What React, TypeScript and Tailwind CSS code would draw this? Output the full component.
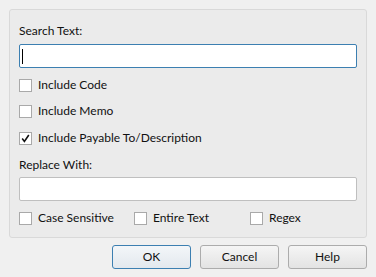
import { ReactNode } from 'react'

// Find/replace dialog: search text, field toggles, replace text, match options.

function Check({ checked = false }: { checked?: boolean }) {
  return (
    <span className="flex h-[13px] w-[13px] shrink-0 items-center justify-center border border-[#a9a9a9] bg-white">
      {checked && (
        <svg width="9" height="9" viewBox="0 0 9 9" fill="none" stroke="#111" strokeWidth="1.6">
          <path d="M1.2 4.6 L3.4 7.4 L7.8 1" />
        </svg>
      )}
    </span>
  )
}

function Option({ label, checked, className = '' }: { label: string; checked?: boolean; className?: string }) {
  return (
    <label className={`flex h-4 items-center gap-[6px] ${className}`}>
      <Check checked={checked} />
      <span>{label}</span>
    </label>
  )
}

function Button({ children, primary }: { children: ReactNode; primary?: boolean }) {
  return (
    <button
      className={
        primary
          ? 'h-6 w-[79px] rounded-[3px] border border-[#3c7fb1] bg-gradient-to-b from-[#f3f6f9] to-[#e3e8ee] text-[#111]'
          : 'h-6 w-[79px] rounded-[3px] border border-[#acacac] bg-gradient-to-b from-[#f5f5f5] to-[#e3e3e3] text-[#111]'
      }
    >
      {children}
    </button>
  )
}

export default function App() {
  return (
    <div className="h-[277px] w-[376px] bg-[#f0f0f0] p-[9px] font-['Lato',sans-serif] text-[12px] leading-4 text-[#111]">
      <div className="flex flex-col rounded-[3px] border border-[#d9d9d9] bg-[#ebebeb] px-[9px] pb-[11px] pt-[13px]">
        <span>Search Text:</span>
        <div className="mt-[5px] flex h-6 items-center rounded-[2px] border border-[#3c7fb1] bg-white px-[2px]">
          <span className="h-[15px] w-px bg-black" />
        </div>

        <Option label="Include Code" className="mt-[9px]" />
        <Option label="Include Memo" className="mt-[10px]" />
        <Option label="Include Payable To/Description" checked className="mt-[11px]" />

        <span className="mt-[11px]">Replace With:</span>
        <div className="mt-1 h-6 rounded-[2px] border border-[#bfbfbf] bg-white" />

        <div className="mt-[9px] flex">
          <Option label="Case Sensitive" className="w-[115px]" />
          <Option label="Entire Text" className="w-[116px]" />
          <Option label="Regex" />
        </div>
      </div>

      <div className="mt-[7px] flex justify-end gap-[9px]">
        <Button primary>OK</Button>
        <Button>Cancel</Button>
        <Button>Help</Button>
      </div>
    </div>
  )
}
